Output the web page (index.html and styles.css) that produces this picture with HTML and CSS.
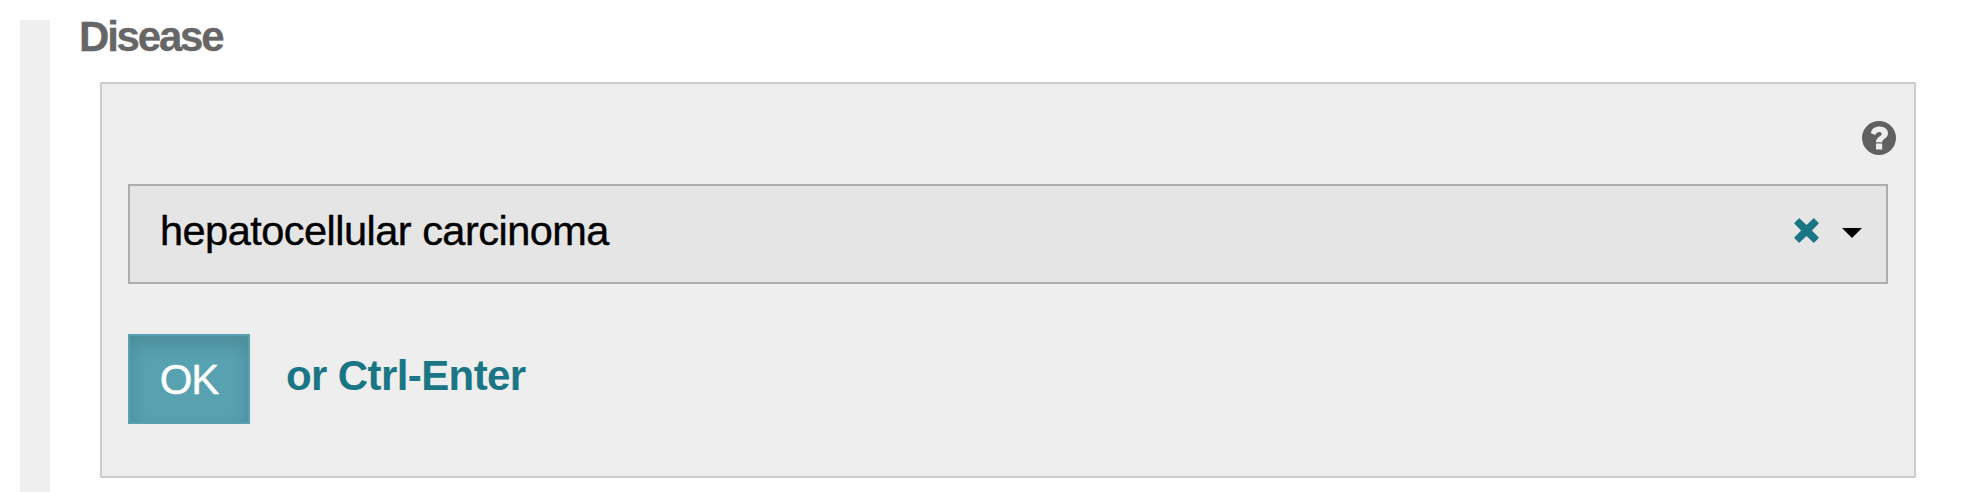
FILE: index.html
```html
<!DOCTYPE html>
<html lang="en">
<head>
<meta charset="utf-8">
<title>Disease</title>
<link rel="stylesheet" href="styles.css">
</head>
<body>
<div class="rail"></div>
<main class="section">
  <h2 class="title">Disease</h2>
  <div class="panel">
    <div class="help-row">
      <svg class="help" viewBox="0 0 34 34" role="img" aria-label="Help">
        <circle class="help-disc" cx="17" cy="17" r="17"/>
        <path class="help-mark" d="M8.8 12C9.6 8 13 5.6 17.5 5.6C22.5 5.6 26 8.4 26 12.3C26 17.5 20.2 17.6 20.2 21.3H14C14 15.8 19.7 15.6 19.7 13C19.7 11.7 18.7 11 17.4 11C15.5 11 14 12 13.2 14ZM14 22.4H20.2V28.4H14Z"/>
      </svg>
    </div>
    <div class="select">
      <span class="value">hepatocellular carcinoma</span>
      <svg class="clear" viewBox="0 0 25 25" role="img" aria-label="Clear">
        <path d="M5.2 1L12.5 8.1L19.8 1L24 5.2L16.9 12.5L24 19.8L19.8 24L12.5 16.9L5.2 24L1 19.8L8.1 12.5L1 5.2Z"/>
      </svg>
      <svg class="caret" viewBox="0 0 20 10"><path d="M0 0H20L10 10Z"/></svg>
    </div>
    <div class="actions">
      <button class="ok">OK</button>
      <span class="hint">or Ctrl-Enter</span>
    </div>
  </div>
</main>
</body>
</html>
```
FILE: styles.css
```css
* { box-sizing: border-box; }

body {
  display: flex;
  height: 492px;
  margin: 0;
  padding: 20px 66px 0 20px;
  overflow: hidden;
  background: #fff;
  font-family: "Liberation Sans", Arial, sans-serif;
  font-size: 42px;
  line-height: 48px;
}

.rail {
  flex: none;
  width: 30px;
  background: #efefef;
}

.section {
  flex: 1;
  margin-top: -7px;
  padding-left: 29px;
}

.title {
  margin: 0;
  color: #666;
  font-size: 42px;
  font-weight: bold;
  letter-spacing: -2.2px;
  -webkit-text-stroke: 0.3px #666;
}

.panel {
  height: 396px;
  margin: 21px 0 0 21px;
  padding: 36px 26px 0;
  border: 2px solid #ccc;
  background: #eee;
}

.help-row {
  display: flex;
  justify-content: flex-end;
  height: 64px;
  margin-right: -8px;
}

.help {
  width: 34px;
  height: 34px;
  margin-top: 1px;
}

.help-disc { fill: #606060; }
.help-mark { fill: #eee; }

.select {
  display: flex;
  align-items: flex-start;
  height: 100px;
  padding: 21px 24px 0 30px;
  border: 2px solid #adadad;
  background: #e5e5e5;
}

.value {
  flex: 1;
  color: #000;
  font-size: 41.5px;
  letter-spacing: -0.52px;
  -webkit-text-stroke: 0.4px #000;
}

.clear {
  width: 25px;
  height: 25px;
  margin: 11px 23px 0 0;
  fill: #1a7685;
  stroke: #1a7685;
  stroke-width: 1.4;
  stroke-linejoin: round;
}

.caret {
  width: 20px;
  height: 10px;
  margin-top: 21px;
}

.actions {
  display: flex;
  align-items: flex-start;
  margin-top: 50px;
}

.ok {
  width: 122px;
  height: 90px;
  padding: 2px 0 0;
  border: 2px solid #57a1b1;
  background: #57a1b1;
  box-shadow: inset 0 8px 18px rgba(0, 0, 0, 0.14);
  color: #fff;
  font: inherit;
  letter-spacing: -1.2px;
  -webkit-text-stroke: 0.4px #fff;
}

.hint {
  margin: 18px 0 0 36px;
  color: #1a7685;
  font-weight: bold;
  letter-spacing: -0.6px;
}
```
